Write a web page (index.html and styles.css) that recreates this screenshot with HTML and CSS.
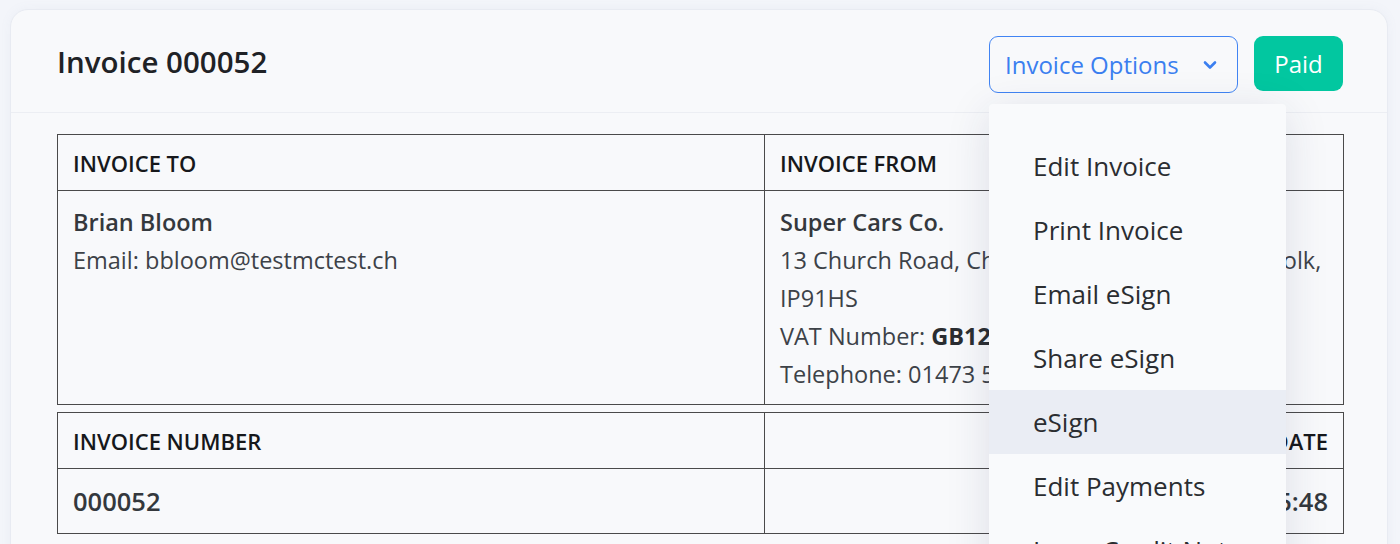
FILE: index.html
```
<!DOCTYPE html>
<html>
<head>
<meta charset="utf-8">
<link rel="stylesheet" href="styles.css">
</head>
<body>
<div class="page">
  <div class="card">
    <div class="card-header">
      <h1 class="title">Invoice 000052</h1>
      <div class="actions">
        <div class="dropdown">
          <button class="btn-options">Invoice Options
            <svg class="chev" width="14" height="10" viewBox="0 0 14 10"><path d="M2 2.5 L7 7.5 L12 2.5" fill="none" stroke="#3b7ff0" stroke-width="2.6" stroke-linecap="round" stroke-linejoin="round"/></svg>
          </button>
          <ul class="menu">
            <li>Edit Invoice</li>
            <li>Print Invoice</li>
            <li>Email eSign</li>
            <li>Share eSign</li>
            <li class="active">eSign</li>
            <li>Edit Payments</li>
            <li>Issue Credit Note</li>
            <li>Delete Invoice</li>
          </ul>
        </div>
        <button class="btn-paid">Paid</button>
      </div>
    </div>
    <div class="card-body">
      <table class="inv">
        <tr>
          <th class="col-l">INVOICE TO</th>
          <th>INVOICE FROM</th>
        </tr>
        <tr>
          <td class="col-l">
            <div class="name">Brian Bloom</div>
            <div>Email: bbloom@testmctest.ch</div>
          </td>
          <td>
            <div class="name">Super Cars Co.</div>
            <div>13 Church Road, Chelmondiston, Ipswich, Suffolk, IP91HS</div>
            <div>VAT Number: <b>GB123456789</b></div>
            <div>Telephone: 01473 555123</div>
          </td>
        </tr>
      </table>
      <table class="inv inv2">
        <tr>
          <th class="col-l">INVOICE NUMBER</th>
          <th class="right">INVOICE DATE</th>
        </tr>
        <tr>
          <td class="col-l big">000052</td>
          <td class="right big">24/05/2023 15:48</td>
        </tr>
      </table>
    </div>
  </div>
</div>
</body>
</html>
```
FILE: styles.css
```
html, body {
  margin: 0;
  padding: 0;
  background: #f3f5fa;
  font-family: "Open Sans", "Noto Sans", sans-serif;
  overflow: hidden;
}
.page {
  padding: 9px 12px 0 10px;
  height: 544px;
  box-sizing: border-box;
}
.card {
  background: #f8f9fb;
  border: 1px solid #e8ebf2;
  border-radius: 18px;
  height: 600px;
  box-shadow: 0 0 12px rgba(120, 130, 170, 0.06);
}
.card-header {
  display: flex;
  justify-content: space-between;
  align-items: center;
  height: 103px;
  box-sizing: border-box;
  padding: 0 44px 0 46px;
  border-bottom: 1px solid #eceef3;
}
.title {
  margin: 0;
  font-size: 29.5px;
  font-weight: 600;
  color: #1f2226;
  letter-spacing: 0;
}
.actions {
  display: flex;
  align-items: center;
  gap: 16px;
  padding-top: 6px;
}
.dropdown {
  position: relative;
}
.btn-options {
  display: flex;
  align-items: center;
  gap: 24px;
  height: 57px;
  width: 249px;
  box-sizing: border-box;
  padding: 0 15px;
  border: 1.5px solid #4184f3;
  border-radius: 9px;
  background: transparent;
  color: #3b7ff0;
  font-family: "Open Sans", sans-serif;
  font-size: 24px;
  cursor: pointer;
}
.chev {
  display: block;
  margin-top: 2px;
}
.btn-paid {
  height: 55px;
  width: 89px;
  padding: 0;
  border: none;
  border-radius: 9px;
  background: #02c7a0;
  color: #ffffff;
  font-family: "Open Sans", sans-serif;
  font-size: 24px;
  font-weight: 500;
  margin-top: -2px;
}
.menu {
  position: absolute;
  top: 68px;
  left: 0;
  width: 297px;
  margin: 0;
  padding: 30px 0 0 0;
  list-style: none;
  background: #f9fafc;
  box-shadow: 0 8px 44px rgba(40, 50, 90, 0.13);
  border-radius: 4px;
  z-index: 10;
}
.menu li {
  height: 64px;
  line-height: 64px;
  padding-left: 44px;
  font-size: 26px;
  color: #2b2d31;
}
.menu li.active {
  background: #eaedf4;
}
.card-body {
  padding: 21px 43px 0 46px;
}
.inv {
  width: 100%;
  border-collapse: collapse;
  font-size: 23.5px;
  color: #3d4248;
}
.inv2 {
  margin-top: 7px;
}
.inv th, .inv td {
  border: 1.5px solid #4a4a4a;
  text-align: left;
  vertical-align: top;
  padding: 12px 15px 11px;
}
.inv th {
  font-size: 22px;
  font-weight: 600;
  color: #16181b;
  line-height: 28px;
  padding-top: 14px;
  padding-bottom: 13px;
}
.inv td {
  line-height: 38px;
}
.col-l {
  width: 676px;
}
.name {
  font-weight: 600;
  color: #34383d;
}
.inv b {
  font-weight: 700;
  color: #2a2d31;
}
.inv .right {
  text-align: right;
}
.inv td.big {
  font-size: 25.5px;
  font-weight: 600;
  color: #34383d;
  padding-top: 13px;
  padding-bottom: 13px;
}
```
